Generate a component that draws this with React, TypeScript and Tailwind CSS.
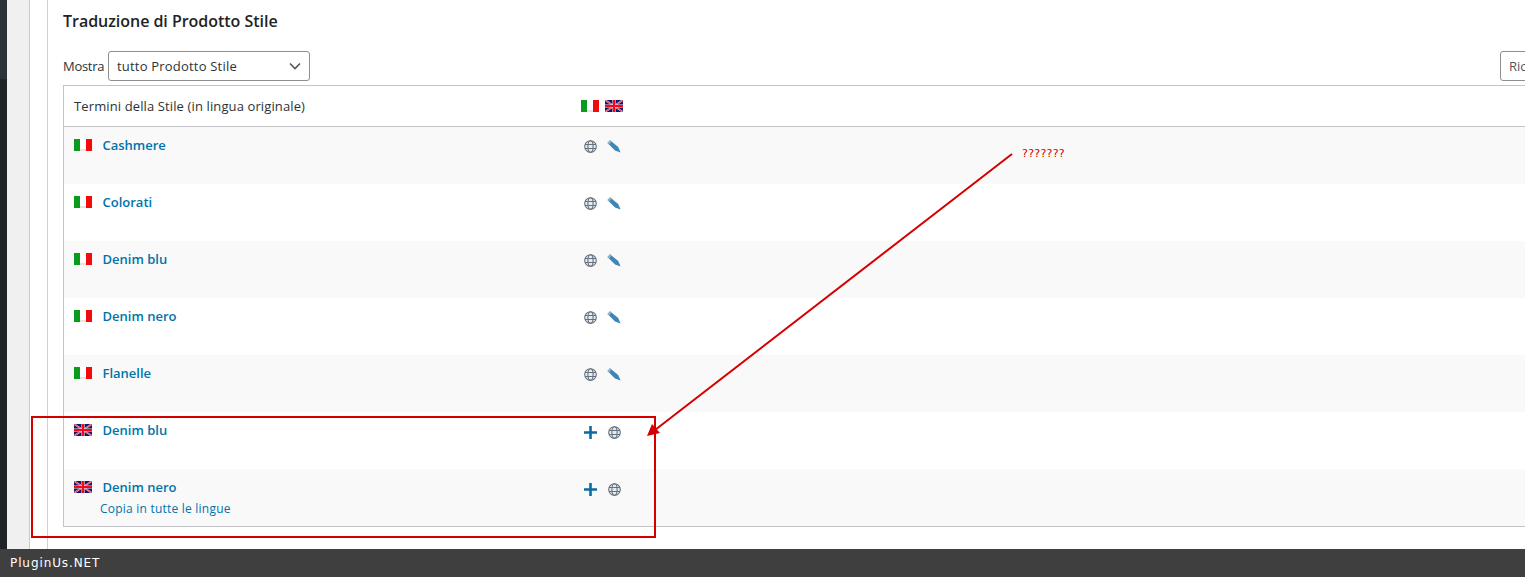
import React from 'react';

const ItalyFlag: React.FC = () => (
  <svg width="18" height="12" viewBox="0 0 18 12" className="block shrink-0">
    <rect width="6" height="12" fill="#0a9a1e" />
    <rect x="6" width="6" height="12" fill="#ffffff" />
    <rect x="6" y="10" width="6" height="2" fill="#e4e4e4" />
    <rect x="12" width="6" height="12" fill="#f40a0a" />
  </svg>
);

const UkFlag: React.FC = () => (
  <svg width="18" height="12" viewBox="0 0 18 12" className="block shrink-0">
    <rect width="18" height="12" fill="#10186a" />
    <path d="M0 0L18 12M18 0L0 12" stroke="#f6cfd6" strokeWidth="1.7" />
    <path d="M0 0L18 12M18 0L0 12" stroke="#e8142a" strokeWidth="0.8" />
    <path d="M9 0V12M0 6H18" stroke="#ffe4e6" strokeWidth="3.2" />
    <path d="M9 0V12M0 6H18" stroke="#f5061a" strokeWidth="2.2" />
  </svg>
);

const GlobeIcon: React.FC = () => (
  <svg width="13" height="13" viewBox="0 0 13 13" fill="#e6ebf0" stroke="#66727e" strokeWidth="1.1" className="block">
    <circle cx="6.5" cy="6.5" r="5.8" />
    <ellipse cx="6.5" cy="6.5" rx="2.6" ry="5.8" fill="none" />
    <path d="M1 4.5H12M1 8.5H12" />
  </svg>
);

const PencilIcon: React.FC = () => (
  <svg width="14" height="13" viewBox="0 0 14 13" className="block">
    <path d="M0.5 3L3 0.2L11.2 7L13.6 12.6L8 10.4Z" fill="#3f85b5" />
    <path d="M0.5 3L3 0.2L4.6 1.6L2.1 4.4Z" fill="#8fb3cd" />
  </svg>
);

const PlusIcon: React.FC = () => (
  <svg width="13" height="13" viewBox="0 0 13 13" className="block">
    <path d="M5.2 0H7.8V5.2H13V7.8H7.8V13H5.2V7.8H0V5.2H5.2Z" fill="#0a6c9f" />
  </svg>
);

type Row = { name: string; lang: 'it' | 'en'; copy?: boolean };

const rows: Row[] = [
  { name: 'Cashmere', lang: 'it' },
  { name: 'Colorati', lang: 'it' },
  { name: 'Denim blu', lang: 'it' },
  { name: 'Denim nero', lang: 'it' },
  { name: 'Flanelle', lang: 'it' },
  { name: 'Denim blu', lang: 'en' },
  { name: 'Denim nero', lang: 'en', copy: true },
];

const App: React.FC = () => {
  return (
    <div className="relative flex h-[577px] w-[1525px] flex-col overflow-hidden bg-white font-['Open_Sans','Noto_Sans',sans-serif] text-[13px] text-[#2c3338]">
      <div className="flex min-h-0 flex-1">
        <div className="flex w-[7px] shrink-0 flex-col">
          <div className="h-[79px] bg-[#2c3338]" />
          <div className="flex-1 bg-[#1d2327]" />
        </div>
        <div className="w-[23px] shrink-0 border-r border-[#c9c9c9] bg-[#f0f0f1]" />
        <div className="w-[18px] shrink-0 border-r border-[#d0d0d0]" />

        <div className="min-w-0 flex-1 pl-[15px]">
          <h2 className="mt-[11px] h-[20px] text-[16px] leading-[20px] font-semibold tracking-[-0.03px] whitespace-nowrap text-[#1d2327]">
            Traduzione di Prodotto Stile
          </h2>

          <div className="mt-[20px] flex h-[30px] items-center">
            <span className="mr-[4px] w-[41px] shrink-0 pt-[2px] tracking-[-0.3px] whitespace-nowrap">Mostra</span>
            <div className="flex h-[30px] w-[202px] shrink-0 items-center justify-between rounded-[3px] border border-[#8c8f94] pr-[7px] pl-[8px]">
              <span className="pt-[2px] tracking-[0.2px] whitespace-nowrap">tutto Prodotto Stile</span>
              <svg width="14" height="14" viewBox="0 0 14 14" fill="none" stroke="#50575e" strokeWidth="1.6">
                <path d="M2 4.5L7 9.5L12 4.5" />
              </svg>
            </div>
            <div className="ml-[1190px] flex h-[30px] w-[80px] shrink-0 items-center rounded-[3px] border border-[#8c8f94] pt-[2px] pl-[8px] text-[#50575e]">
              Ricerca
            </div>
          </div>

          <div className="mt-[4px] w-[1600px] border border-[#c3c4c7]">
            <div className="grid h-[41px] grid-cols-[507px_1fr] items-center border-b border-[#c3c4c7]">
              <div className="pt-[2px] pl-[10px] tracking-[0.12px] whitespace-nowrap">Termini della Stile (in lingua originale)</div>
              <div className="flex gap-[6px] pl-[10px]">
                <ItalyFlag />
                <UkFlag />
              </div>
            </div>

            {rows.map((row, i) => (
              <div key={i} className={`grid h-[57px] grid-cols-[507px_1fr] ${i % 2 === 0 ? 'bg-[#f9f9f9]' : 'bg-white'}`}>
                <div className="pt-[8px] pl-[10px]">
                  <div className="flex h-[20px] items-center">
                    <span className="mr-[11px] block">{row.lang === 'it' ? <ItalyFlag /> : <UkFlag />}</span>
                    <a className="ml-[-0.5px] pt-[2px] font-semibold whitespace-nowrap text-[#0073aa]">{row.name}</a>
                  </div>
                  {row.copy && (
                    <a className="mt-[3px] ml-[26px] block text-[12px] leading-[18px] tracking-[0.22px] whitespace-nowrap text-[#0073aa]">
                      Copia in tutte le lingue
                    </a>
                  )}
                </div>
                {row.lang === 'it' ? (
                  <div className="flex items-start gap-[10px] pt-[13px] pl-[13px]">
                    <GlobeIcon />
                    <PencilIcon />
                  </div>
                ) : (
                  <div className="flex items-start gap-[11px] pt-[14px] pl-[13px]">
                    <PlusIcon />
                    <GlobeIcon />
                  </div>
                )}
              </div>
            ))}
          </div>
        </div>
      </div>

      <div className="flex h-[28px] shrink-0 items-center bg-[#3f3f3f] pl-[10px] font-['DejaVu_Sans',sans-serif] text-[12px] tracking-[0.9px] text-white">
        PluginUs.NET
      </div>

      {/* annotation drawn on top of the screenshot */}
      <div className="absolute top-[416px] left-[31px] h-[122px] w-[625px] border-2 border-[#d40000]" />
      <svg className="absolute top-0 left-0" width="1525" height="577" fill="none">
        <path d="M1012 154L655 430" stroke="#d40000" strokeWidth="2" />
        <path d="M647 436L652 424L660 433Z" fill="#d40000" />
      </svg>
      <span className="absolute top-[147px] left-[1022px] font-['DejaVu_Sans',sans-serif] text-[11px] leading-[14px] tracking-[0.3px] text-[#d40000]">
        ???????
      </span>
    </div>
  );
};

export default App;
